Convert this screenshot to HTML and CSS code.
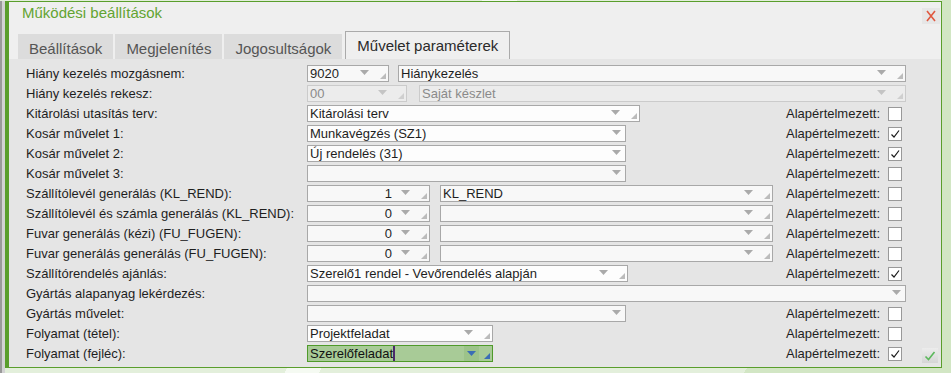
FILE: index.html
```html
<!DOCTYPE html>
<html lang="hu">
<head>
  <meta charset="UTF-8">
  <title>Működési beállítások</title>
  <link rel="stylesheet" href="styles.css">
</head>
<body>
  <div class="page">
    <div class="edge"></div>
    <div class="dialog">
      <div class="titlebar">
        <h1>Működési beállítások</h1>
        <button class="close" title="Bezárás">
          <svg viewBox="0 0 10 12" width="10" height="12"><path d="M1 1L9 11M9 1L1 11" stroke="#e0583f" stroke-width="1.6"/></svg>
        </button>
      </div>

      <div class="tabs">
        <div class="tab">Beállítások</div>
        <div class="tab">Megjelenítés</div>
        <div class="tab">Jogosultságok</div>
        <div class="tab active">Művelet paraméterek</div>
      </div>

      <div class="panel">
        <div class="rows">
          <!-- Hiány -->
          <div class="row">
            <label class="row-label">Hiány kezelés mozgásnem:</label>
            <div class="fields full">
              <div class="field w82"><span class="val">9020</span><svg class="arr" viewBox="0 0 9 5"><path d="M0 0H9L4.5 5z"/></svg><svg class="grip" viewBox="0 0 6 6"><path d="M6 0V6H0z"/></svg></div>
              <div class="field grow gap9"><span class="val">Hiánykezelés</span><svg class="arr" viewBox="0 0 9 5"><path d="M0 0H9L4.5 5z"/></svg><svg class="grip" viewBox="0 0 6 6"><path d="M6 0V6H0z"/></svg></div>
            </div>
          </div>
          <div class="row">
            <label class="row-label">Hiány kezelés rekesz:</label>
            <div class="fields full">
              <div class="field off w100"><span class="val">00</span><svg class="arr" viewBox="0 0 9 5"><path d="M0 0H9L4.5 5z"/></svg><svg class="grip" viewBox="0 0 6 6"><path d="M6 0V6H0z"/></svg></div>
              <div class="field off grow gap12"><span class="val">Saját készlet</span><svg class="arr" viewBox="0 0 9 5"><path d="M0 0H9L4.5 5z"/></svg><svg class="grip" viewBox="0 0 6 6"><path d="M6 0V6H0z"/></svg></div>
            </div>
          </div>
          <div class="row">
            <label class="row-label">Kitárolási utasítás terv:</label>
            <div class="fields">
              <div class="field w333 white"><span class="val">Kitárolási terv</span><svg class="arr" viewBox="0 0 9 5"><path d="M0 0H9L4.5 5z"/></svg><svg class="grip" viewBox="0 0 6 6"><path d="M6 0V6H0z"/></svg></div>
            </div>
            <div class="def">Alapértelmezett:<span class="chk"></span></div>
          </div>

          <!-- Kosár -->
          <div class="row">
            <label class="row-label">Kosár művelet 1:</label>
            <div class="fields">
              <div class="field w319 white"><span class="val">Munkavégzés (SZ1)</span><svg class="arr only" viewBox="0 0 9 5"><path d="M0 0H9L4.5 5z"/></svg></div>
            </div>
            <div class="def">Alapértelmezett:<span class="chk on"><svg viewBox="0 0 12 12"><path d="M2.5 6.5L5 9L10 2.5"/></svg></span></div>
          </div>
          <div class="row">
            <label class="row-label">Kosár művelet 2:</label>
            <div class="fields">
              <div class="field w319 white"><span class="val">Új rendelés (31)</span><svg class="arr only" viewBox="0 0 9 5"><path d="M0 0H9L4.5 5z"/></svg></div>
            </div>
            <div class="def">Alapértelmezett:<span class="chk on"><svg viewBox="0 0 12 12"><path d="M2.5 6.5L5 9L10 2.5"/></svg></span></div>
          </div>
          <div class="row">
            <label class="row-label">Kosár művelet 3:</label>
            <div class="fields">
              <div class="field w319"><span class="val"></span><svg class="arr only" viewBox="0 0 9 5"><path d="M0 0H9L4.5 5z"/></svg></div>
            </div>
            <div class="def">Alapértelmezett:<span class="chk"></span></div>
          </div>

          <!-- Szállítólevél / fuvar -->
          <div class="row">
            <label class="row-label">Szállítólevél generálás (KL_REND):</label>
            <div class="fields">
              <div class="field w123"><span class="val num">1</span><svg class="arr" viewBox="0 0 9 5"><path d="M0 0H9L4.5 5z"/></svg><svg class="grip" viewBox="0 0 6 6"><path d="M6 0V6H0z"/></svg></div>
              <div class="field w333 gap10"><span class="val">KL_REND</span><svg class="arr" viewBox="0 0 9 5"><path d="M0 0H9L4.5 5z"/></svg><svg class="grip" viewBox="0 0 6 6"><path d="M6 0V6H0z"/></svg></div>
            </div>
            <div class="def">Alapértelmezett:<span class="chk"></span></div>
          </div>
          <div class="row">
            <label class="row-label">Szállítólevél és számla generálás (KL_REND):</label>
            <div class="fields">
              <div class="field w123"><span class="val num">0</span><svg class="arr" viewBox="0 0 9 5"><path d="M0 0H9L4.5 5z"/></svg><svg class="grip" viewBox="0 0 6 6"><path d="M6 0V6H0z"/></svg></div>
              <div class="field w333 gap10"><span class="val"></span><svg class="arr" viewBox="0 0 9 5"><path d="M0 0H9L4.5 5z"/></svg><svg class="grip" viewBox="0 0 6 6"><path d="M6 0V6H0z"/></svg></div>
            </div>
            <div class="def">Alapértelmezett:<span class="chk"></span></div>
          </div>
          <div class="row">
            <label class="row-label">Fuvar generálás (kézi) (FU_FUGEN):</label>
            <div class="fields">
              <div class="field w123"><span class="val num">0</span><svg class="arr" viewBox="0 0 9 5"><path d="M0 0H9L4.5 5z"/></svg><svg class="grip" viewBox="0 0 6 6"><path d="M6 0V6H0z"/></svg></div>
              <div class="field w333 gap10"><span class="val"></span><svg class="arr" viewBox="0 0 9 5"><path d="M0 0H9L4.5 5z"/></svg><svg class="grip" viewBox="0 0 6 6"><path d="M6 0V6H0z"/></svg></div>
            </div>
            <div class="def">Alapértelmezett:<span class="chk"></span></div>
          </div>
          <div class="row">
            <label class="row-label">Fuvar generálás generálás (FU_FUGEN):</label>
            <div class="fields">
              <div class="field w123"><span class="val num">0</span><svg class="arr" viewBox="0 0 9 5"><path d="M0 0H9L4.5 5z"/></svg><svg class="grip" viewBox="0 0 6 6"><path d="M6 0V6H0z"/></svg></div>
              <div class="field w333 gap10"><span class="val"></span><svg class="arr" viewBox="0 0 9 5"><path d="M0 0H9L4.5 5z"/></svg><svg class="grip" viewBox="0 0 6 6"><path d="M6 0V6H0z"/></svg></div>
            </div>
            <div class="def">Alapértelmezett:<span class="chk"></span></div>
          </div>

          <div class="row">
            <label class="row-label">Szállítórendelés ajánlás:</label>
            <div class="fields">
              <div class="field w321 white"><span class="val">Szerelő1 rendel - Vevőrendelés alapján</span><svg class="arr" viewBox="0 0 9 5"><path d="M0 0H9L4.5 5z"/></svg><svg class="grip" viewBox="0 0 6 6"><path d="M6 0V6H0z"/></svg></div>
            </div>
            <div class="def">Alapértelmezett:<span class="chk on"><svg viewBox="0 0 12 12"><path d="M2.5 6.5L5 9L10 2.5"/></svg></span></div>
          </div>

          <!-- Gyártás -->
          <div class="row">
            <label class="row-label">Gyártás alapanyag lekérdezés:</label>
            <div class="fields full">
              <div class="field grow"><span class="val"></span><svg class="arr only" viewBox="0 0 9 5"><path d="M0 0H9L4.5 5z"/></svg></div>
            </div>
          </div>
          <div class="row">
            <label class="row-label">Gyártás művelet:</label>
            <div class="fields">
              <div class="field w319"><span class="val"></span><svg class="arr only" viewBox="0 0 9 5"><path d="M0 0H9L4.5 5z"/></svg></div>
            </div>
            <div class="def">Alapértelmezett:<span class="chk"></span></div>
          </div>

          <!-- Folyamat -->
          <div class="row">
            <label class="row-label">Folyamat (tétel):</label>
            <div class="fields">
              <div class="field w186 white"><span class="val">Projektfeladat</span><svg class="arr" viewBox="0 0 9 5"><path d="M0 0H9L4.5 5z"/></svg><svg class="grip" viewBox="0 0 6 6"><path d="M6 0V6H0z"/></svg></div>
            </div>
            <div class="def">Alapértelmezett:<span class="chk"></span></div>
          </div>
          <div class="row">
            <label class="row-label">Folyamat (fejléc):</label>
            <div class="fields">
              <div class="field w186 focus"><span class="val">Szerelőfeladat<span class="caret"></span></span><span class="arr-box"><svg class="arr" viewBox="0 0 9 5"><path d="M0 0H9L4.5 5z"/></svg></span><svg class="grip" viewBox="0 0 6 6"><path d="M6 0V6H0z"/></svg></div>
            </div>
            <div class="def">Alapértelmezett:<span class="chk on"><svg viewBox="0 0 12 12"><path d="M2.5 6.5L5 9L10 2.5"/></svg></span></div>
          </div>
        </div>

        <div class="side">
          <button class="ok" title="Mentés">
            <svg viewBox="0 0 12 12" width="12" height="12"><path d="M1.5 6.5L4.5 9.5L10.5 2" fill="none" stroke="#5cb85c" stroke-width="1.6"/></svg>
          </button>
        </div>
      </div>
    </div>
  </div>
</body>
</html>
```

FILE: styles.css
```css
:root {
  --green: #5a9e2c;
  --title-green: #62a432;
  --bg-light: #efefef;
  --panel-bg: #e5e5e5;
  --field-border: #a8a8a8;
  --field-bg: #f8f8f8;
  --text-color: #1e1e1e;
}

* {
  margin: 0;
  padding: 0;
  box-sizing: border-box;
}

body {
  width: 951px;
  height: 373px;
  overflow: hidden;
  font-family: "Liberation Sans", Arial, sans-serif;
  color: var(--text-color);
  background: linear-gradient(118deg, #e3efdb 0 42%, #f5faf2 42% 45%, #e3efdb 45% 82%, #d2e6c4 82% 100%);
}

.page {
  display: flex;
  padding-top: 1px;
}

.edge {
  width: 5px;
  height: 372px;
  background: #d3d3d3;
  border-left: 2px solid #9a9a9a;
}

.dialog {
  width: 937px;
  height: 367px;
  display: flex;
  flex-direction: column;
  background: var(--bg-light);
  border: 1px solid var(--green);
  border-left: 4px solid var(--green);
}

/* Fejléc */
.titlebar {
  height: 29px;
  display: flex;
  align-items: flex-start;
  justify-content: space-between;
  padding: 2px 1px 0 13px;
}

.titlebar h1 {
  font-size: 15px;
  font-weight: normal;
  line-height: 17px;
  color: var(--title-green);
}

.close {
  width: 18px;
  height: 16px;
  margin-top: 4px;
  border: none;
  background: #e6e6e6;
  display: flex;
  align-items: center;
  justify-content: center;
}

/* Fülek */
.tabs {
  height: 28px;
  display: flex;
  align-items: flex-end;
  gap: 2px;
  padding-left: 9px;
}

.tab {
  height: 25px;
  padding: 6px 11px 0;
  font-size: 15px;
  line-height: 17px;
  color: #555;
  background: #dcdcdc;
  white-space: nowrap;
}

.tab.active {
  height: 28px;
  margin-left: 1px;
  padding-top: 5px;
  color: #2a2a2a;
  background: var(--bg-light);
  border: 1px solid #aaa;
  border-bottom: none;
}

/* Tartalom */
.panel {
  flex: 1;
  display: flex;
  padding: 5px 0 3px;
  background: var(--panel-bg);
}

.rows {
  width: 897px;
}

.row {
  height: 20px;
  display: flex;
  align-items: flex-start;
  padding-left: 17px;
}

.row-label {
  width: 281px;
  flex: none;
  font-size: 13px;
  line-height: 19px;
  white-space: nowrap;
}

.fields {
  display: flex;
  margin-top: 1px;
}

.fields.full {
  flex: 1;
}

.field {
  height: 17px;
  display: flex;
  align-items: center;
  border: 1px solid var(--field-border);
  background: var(--field-bg);
  font-size: 13px;
}

.field.white { background: #fdfdfd; }
.field.grow { flex: 1; }
.w82 { width: 82px; }
.w100 { width: 100px; }
.w123 { width: 123px; }
.w186 { width: 186px; }
.w319 { width: 319px; }
.w321 { width: 321px; }
.w333 { width: 333px; }
.gap9 { margin-left: 9px; }
.gap10 { margin-left: 10px; }
.gap12 { margin-left: 12px; }

.val {
  flex: 1;
  padding-left: 2px;
  line-height: 15px;
  white-space: nowrap;
  overflow: hidden;
  display: flex;
  align-items: center;
}

.val.num {
  justify-content: flex-end;
  padding-right: 9px;
}

.arr {
  width: 9px;
  height: 5px;
  flex: none;
  margin-bottom: 2px;
  fill: #aaa;
}

.arr.only {
  margin-right: 4px;
}

.grip {
  width: 6px;
  height: 6px;
  flex: none;
  align-self: flex-end;
  margin: 0 2px 2px 11px;
  fill: #bcbcbc;
}

.field.off {
  border-color: #cbcbcb;
  background: #ececec;
  color: #8a8a8a;
}

.field.off .arr { fill: #c4c4c4; }
.field.off .grip { fill: #cfcfcf; }

/* Aktív mező */
.field.focus {
  border-color: #4f9a2a;
  background: #a8cb97;
  color: #111;
}

.caret {
  width: 2px;
  height: 15px;
  background: #4b2a6b;
}

.arr-box {
  height: 15px;
  width: 15px;
  display: flex;
  align-items: center;
  justify-content: center;
  margin-right: -3px;
  background: #9cc38a;
}

.arr-box .arr {
  margin: 0;
  fill: #3a6db5;
}

.field.focus .grip {
  margin-left: 8px;
  fill: #3a6db5;
}

/* Alapértelmezett jelölő */
.def {
  margin-left: auto;
  margin-right: 4px;
  display: flex;
  align-items: center;
  gap: 8px;
  height: 19px;
  font-size: 13px;
  white-space: nowrap;
}

.chk {
  width: 14px;
  height: 14px;
  border: 1px solid #999;
  background: #fff;
  display: flex;
  align-items: center;
  justify-content: center;
}

.chk svg {
  width: 12px;
  height: 12px;
  fill: none;
  stroke: #1a1a1a;
  stroke-width: 1.2;
}

.side {
  flex: 1;
  display: flex;
  align-items: flex-end;
  padding-left: 16px;
}

.ok {
  width: 16px;
  height: 15px;
  margin-bottom: 1px;
  border: none;
  background: linear-gradient(#ececec, #d6d6d6);
  display: flex;
  align-items: center;
  justify-content: center;
}
```
